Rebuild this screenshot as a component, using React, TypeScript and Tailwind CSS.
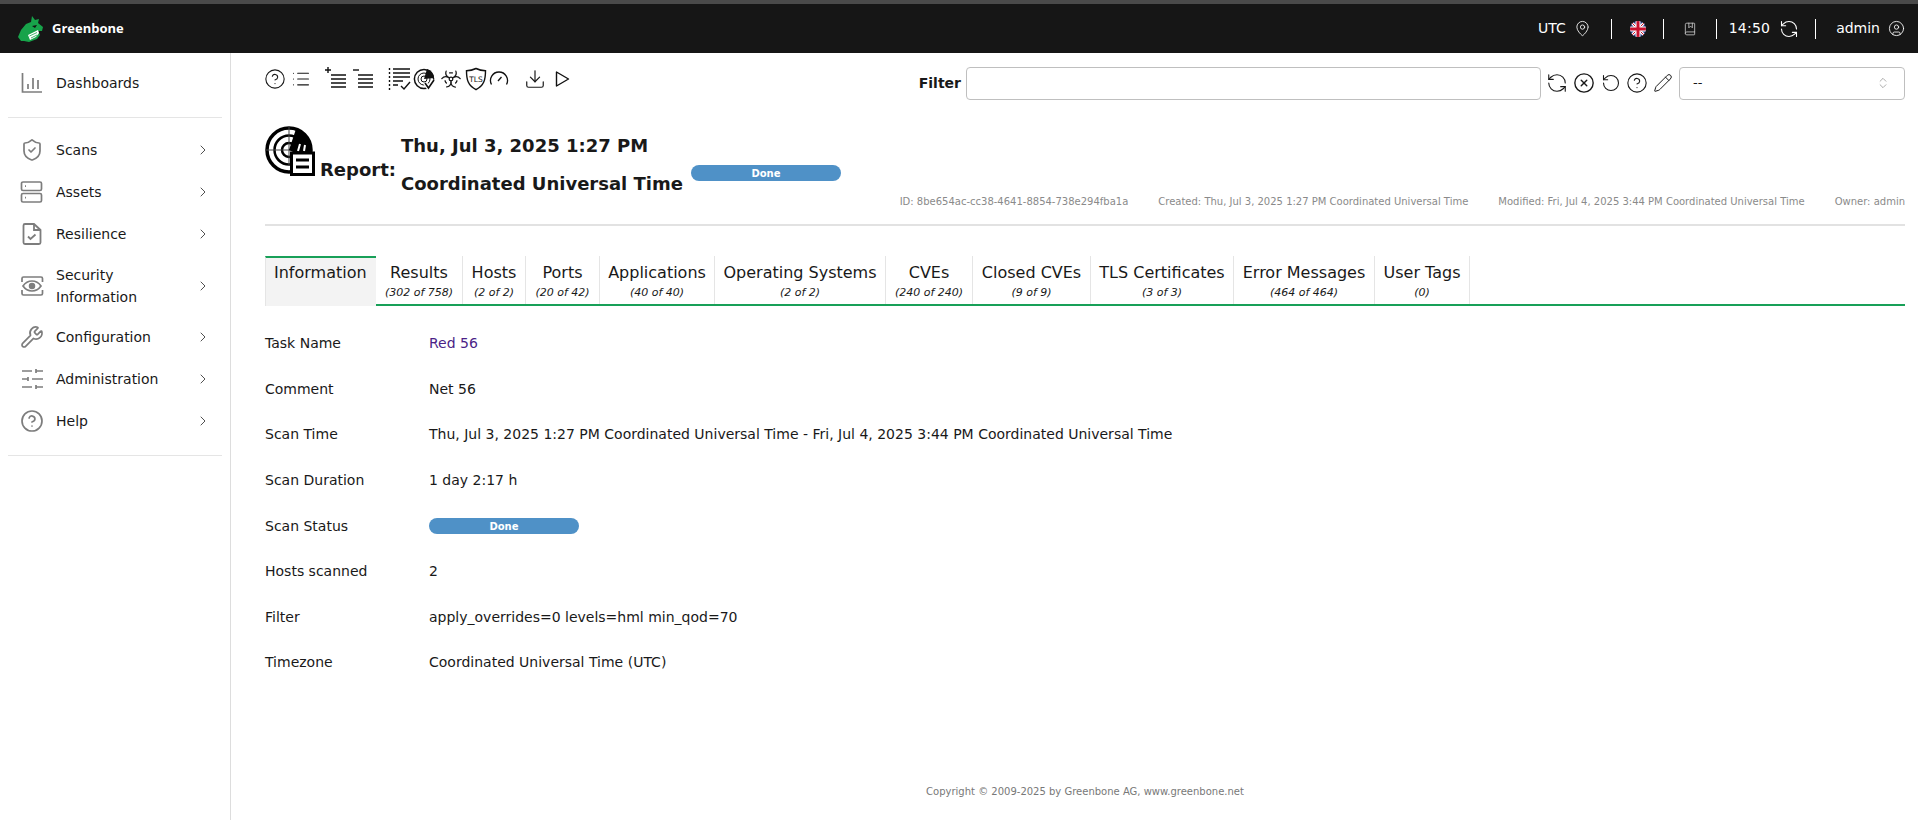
import {
  ChevronRight,
  ChevronsUpDown,
  CircleHelp,
  CircleUser,
  CircleX,
  Download,
  List,
  MapPin,
  Pencil,
  RefreshCcw,
  RotateCcw,
  ShieldCheck,
  Wrench,
  Biohazard,
  BookMarked,
} from "lucide-react";
import type { ReactNode } from "react";

const font = { fontFamily: '"DejaVu Sans", sans-serif' };

function Logo() {
  return (
    <svg viewBox="0 0 25 26" className="h-[26px] w-[25px]">
      <path d="M0 21 L3 14 L8 8 L13 6 L14 0 L17 4 L21 3 L20 7 L25 11 L24 15 L20 15 L22 19 L19 23 L11 26 L6 25 L3 25 Z" fill="#17a34a" />
      <path d="M10 19 L20 14 L21 17 L18 21 L12 24 Z" fill="#fff" />
      <path d="M11.5 20 L19 16.5M13 22 L19 19" stroke="#17a34a" strokeWidth="0.8" />
      <path d="M14 10 L19 9 L17 12 Z" fill="#111" />
    </svg>
  );
}

function DashboardIcon() {
  return (
    <svg viewBox="0 0 24 24" fill="none" stroke="#7d7d7d" strokeWidth="1.7" className="h-[24px] w-[24px]">
      <path d="M2.5 2v19h19.5" />
      <path d="M8 13v5M13 7v11M18 9v9" />
    </svg>
  );
}

function AssetsIcon() {
  return (
    <svg viewBox="0 0 24 24" fill="none" stroke="#7d7d7d" strokeWidth="1.7" className="h-[24px] w-[24px]">
      <rect x="1.5" y="2" width="20" height="8.5" rx="1.5" />
      <rect x="1.5" y="13.5" width="20" height="8.5" rx="1.5" />
      <path d="M5 6.2h1M5 17.7h1" />
    </svg>
  );
}

function ResilienceIcon() {
  return (
    <svg viewBox="0 0 24 24" fill="none" stroke="#7d7d7d" strokeWidth="1.8" className="h-[24px] w-[24px]">
      <path d="M14 2H5a1.5 1.5 0 0 0-1.5 1.5v17A1.5 1.5 0 0 0 5 22h14a1.5 1.5 0 0 0 1.5-1.5V8Z" />
      <path d="M14 2v6h6.5" />
      <path d="M8 14.5l2.5 2.5 5-4.5" />
    </svg>
  );
}

function SecurityIcon() {
  return (
    <svg viewBox="0 0 24 24" fill="none" stroke="#7d7d7d" strokeWidth="1.7" className="h-[24px] w-[24px]">
      <path d="M2 8V4.5A1.5 1.5 0 0 1 3.5 3H21a1.5 1.5 0 0 1 1.5 1.5V8M2 16v3.5A1.5 1.5 0 0 0 3.5 21H21a1.5 1.5 0 0 0 1.5-1.5V16" />
      <path d="M3 12s3.5-5 9-5 9 5 9 5-3.5 5-9 5-9-5-9-5Z" />
      <circle cx="12" cy="12" r="2.4" fill="#7d7d7d" />
    </svg>
  );
}

function AdminIcon() {
  return (
    <svg viewBox="0 0 24 24" fill="none" stroke="#7d7d7d" strokeWidth="1.7" className="h-[24px] w-[24px]">
      <path d="M2 4h10M16 4h7M16 2v4" />
      <path d="M2 12h6M8 10v4M12 12h11" />
      <path d="M2 20h10M16 20h7M16 18v4" />
    </svg>
  );
}

function ListPlus({ sign }: { sign: "+" | "-" }) {
  return (
    <svg viewBox="0 0 24 24" fill="none" stroke="#111" strokeWidth="1.4" className="h-[24px] w-[24px]">
      {sign === "+" ? <path d="M1 3h6M4 0v6" /> : <path d="M2 3h6" />}
      <path d="M7 8h15M7 12h15M7 16h15M7 20h15" />
    </svg>
  );
}

function ResultsIcon() {
  return (
    <svg viewBox="0 0 24 24" fill="none" stroke="#111" strokeWidth="1.4" className="h-[24px] w-[24px]">
      <path d="M1.5 1v22" strokeDasharray="2 2" />
      <path d="M5 2h17M5 6h17M5 10h17M5 14h10M5 18h5" />
      <path d="M13 19l3 3 6-7" />
    </svg>
  );
}

function RadarCheck() {
  return (
    <svg viewBox="0 0 24 24" fill="none" stroke="#111" className="h-[24px] w-[24px]">
      <circle cx="12" cy="12" r="9.6" strokeWidth="1.5" />
      <circle cx="12" cy="12" r="6" strokeWidth="1" />
      <circle cx="12" cy="12" r="3" strokeWidth="1" />
      <path d="M12 12 L15 2 A10 10 0 0 1 22 11 Z" fill="#111" stroke="none" />
      <path d="M13 16l3.5 5 5.5-8" stroke="#fff" strokeWidth="4" />
      <path d="M13 16l3.5 5 5.5-8" strokeWidth="1.6" />
    </svg>
  );
}

function TlsIcon() {
  return (
    <svg viewBox="0 0 24 24" fill="none" stroke="#111" strokeWidth="1.4" className="h-[24px] w-[24px]">
      <path d="M12 1.5c3 1.5 6 2.2 9.5 2.2 0 9-1.5 15-9.5 19-8-4-9.5-10-9.5-19 3.5 0 6.5-.7 9.5-2.2Z" />
      <text x="12" y="14.5" textAnchor="middle" fontSize="7.5" fill="#111" stroke="none" fontFamily="DejaVu Sans">TLS</text>
    </svg>
  );
}

function GaugeIcon() {
  return (
    <svg viewBox="0 0 20 20" fill="none" stroke="#111" strokeWidth="1.3" className="h-[20px] w-[20px]">
      <path d="M2.5 15.5A8.5 8.5 0 1 1 17.5 15.5" />
      <path d="M9 12l3.5-4" />
    </svg>
  );
}

function PlayIcon() {
  return (
    <svg viewBox="0 0 20 20" fill="none" stroke="#111" strokeWidth="1.4" className="h-[20px] w-[20px]">
      <path d="M3.5 3v14l12-7Z" strokeLinejoin="round" />
    </svg>
  );
}

function FlagIcon() {
  return (
    <svg viewBox="0 0 16 16" className="h-[16px] w-[16px]">
      <clipPath id="flag">
        <circle cx="8" cy="8" r="8" />
      </clipPath>
      <g clipPath="url(#flag)">
        <rect width="16" height="16" fill="#2b3f87" />
        <path d="M0 0L16 16M16 0L0 16" stroke="#fff" strokeWidth="3" />
        <path d="M0 0L16 16M16 0L0 16" stroke="#c8102e" strokeWidth="1" />
        <path d="M8 0V16M0 8H16" stroke="#fff" strokeWidth="5" />
        <path d="M8 0V16M0 8H16" stroke="#c8102e" strokeWidth="3" />
      </g>
    </svg>
  );
}

function ReportIcon() {
  return (
    <svg viewBox="0 0 50 50" fill="none" stroke="#000" className="h-[50px] w-[50px]">
      <circle cx="24" cy="24" r="22" strokeWidth="3.5" />
      <circle cx="24" cy="24" r="14.5" strokeWidth="2.5" />
      <circle cx="24" cy="24" r="7" strokeWidth="2.5" />
      <path d="M24 1V40M1 24H40" strokeWidth="1" stroke="#444" />
      <path d="M24 24 L31 3 A22 22 0 0 1 46 20 L46 26 L28 26 Z" fill="#000" stroke="none" />
      <path d="M33 25l2-7M39 25l1-6" stroke="#fff" strokeWidth="2" />
      <rect x="26.5" y="27" width="22" height="21.5" fill="#fff" strokeWidth="3" />
      <path d="M31 34h13M31 41h13" strokeWidth="3" />
    </svg>
  );
}

const navItems: { label: ReactNode; icon: ReactNode; h: string }[] = [
  { label: "Scans", icon: <ShieldCheck size={24} strokeWidth={1.7} color="#7d7d7d" />, h: "h-[42px]" },
  { label: "Assets", icon: <AssetsIcon />, h: "h-[42px]" },
  { label: "Resilience", icon: <ResilienceIcon />, h: "h-[42px]" },
  { label: <>Security<br />Information</>, icon: <SecurityIcon />, h: "h-[61px]" },
  { label: "Configuration", icon: <Wrench size={24} strokeWidth={1.7} color="#7d7d7d" />, h: "h-[42px]" },
  { label: "Administration", icon: <AdminIcon />, h: "h-[42px]" },
  { label: "Help", icon: <CircleHelp size={24} strokeWidth={1.7} color="#7d7d7d" />, h: "h-[42px]" },
];

const tabs = [
  { name: "Results", sub: "(302 of 758)", w: "w-[87px]" },
  { name: "Hosts", sub: "(2 of 2)", w: "w-[63px]" },
  { name: "Ports", sub: "(20 of 42)", w: "w-[74px]" },
  { name: "Applications", sub: "(40 of 40)", w: "w-[115px]" },
  { name: "Operating Systems", sub: "(2 of 2)", w: "w-[171px]" },
  { name: "CVEs", sub: "(240 of 240)", w: "w-[87px]" },
  { name: "Closed CVEs", sub: "(9 of 9)", w: "w-[118px]" },
  { name: "TLS Certificates", sub: "(3 of 3)", w: "w-[143px]" },
  { name: "Error Messages", sub: "(464 of 464)", w: "w-[141px]" },
  { name: "User Tags", sub: "(0)", w: "w-[95px]" },
];

function DoneBar({ className }: { className: string }) {
  return (
    <div className={`flex h-[16px] w-[150px] items-center justify-center rounded-full bg-[#4f91c7] text-[10px] font-bold text-white ${className}`}>
      Done
    </div>
  );
}

function Row({ label, children }: { label: string; children: ReactNode }) {
  return (
    <div className="flex h-[45.6px] items-center text-[14px] text-[#191919]">
      <div className="w-[164px]">{label}</div>
      <div>{children}</div>
    </div>
  );
}

export default function App() {
  return (
    <div style={font} className="flex h-[820px] w-[1918px] flex-col overflow-hidden bg-white text-[#191919]">
      <header className="flex h-[53px] flex-none items-center justify-between border-t-[4px] border-[#4a4a4a] bg-[#161616] pl-[18px] pr-[13px] text-white">
        <div className="flex items-center gap-[9px]">
          <Logo />
          <span className="font-['Open_Sans'] text-[13px] font-bold">Greenbone</span>
        </div>
        <div className="flex items-center text-[14px]">
          <span>UTC</span>
          <MapPin size={17} strokeWidth={1.2} className="ml-[8px]" />
          <div className="ml-[20px] h-[20px] w-px bg-white" />
          <div className="ml-[18px]"><FlagIcon /></div>
          <div className="ml-[17px] h-[20px] w-px bg-white" />
          <BookMarked size={14} strokeWidth={1.4} className="ml-[19px] text-[#cccccc]" />
          <div className="ml-[19px] h-[20px] w-px bg-white" />
          <span className="ml-[12px] tracking-[0.2px]">14:50</span>
          <RefreshCcw size={20} strokeWidth={1.3} className="ml-[9px]" />
          <div className="ml-[16px] h-[20px] w-px bg-white" />
          <span className="ml-[20px]">admin</span>
          <CircleUser size={17} strokeWidth={1.2} className="ml-[8px]" />
        </div>
      </header>

      <div className="flex min-h-0 flex-1">
        <aside className="w-[231px] flex-none border-r border-[#dddddd]">
          <div className="mx-[8px] border-b border-[#e5e5e5] pb-[13px] pt-[9px]">
            <div className="flex h-[42px] items-center pl-[12px] text-[14px]">
              <DashboardIcon />
              <span className="ml-[12px]">Dashboards</span>
            </div>
          </div>
          <div className="mx-[8px] border-b border-[#e5e5e5] pb-[13px] pt-[11px]">
            {navItems.map((item, i) => (
              <div key={i} className={`flex items-center pl-[12px] pr-[11px] text-[14px] leading-[22px] ${item.h}`}>
                {item.icon}
                <span className="ml-[12px] flex-1">{item.label}</span>
                <ChevronRight size={16} strokeWidth={1.4} color="#444" />
              </div>
            ))}
          </div>
        </aside>

        <main className="flex min-w-0 flex-1 flex-col pl-[34px] pr-[13px]">
          <div className="flex h-[60px] flex-none items-center justify-between">
            <div className="mb-[8px] flex items-center">
              <CircleHelp size={22} strokeWidth={1.2} className="-ml-[1px]" />
              <List size={20} strokeWidth={1.3} className="ml-[5px]" />
              <div className="ml-[13px]"><ListPlus sign="+" /></div>
              <div className="ml-[3px]"><ListPlus sign="-" /></div>
              <div className="ml-[13px]"><ResultsIcon /></div>
              <div><RadarCheck /></div>
              <Biohazard size={22} strokeWidth={1.4} className="ml-[4px]" />
              <div className="ml-[2px]"><TlsIcon /></div>
              <div className="ml-[1px]"><GaugeIcon /></div>
              <Download size={22} strokeWidth={1.3} className="ml-[15px]" />
              <div className="ml-[7px]"><PlayIcon /></div>
            </div>
            <div className="flex items-center">
              <span className="text-[14px] font-bold">Filter</span>
              <div className="ml-[5px] h-[33px] w-[575px] rounded-[4px] border border-[#bfbfbf]" />
              <RefreshCcw size={22} strokeWidth={1.2} className="ml-[5px]" />
              <CircleX size={22} strokeWidth={1.5} className="ml-[5px]" />
              <RotateCcw size={20} strokeWidth={1.3} className="ml-[6px]" />
              <CircleHelp size={22} strokeWidth={1.2} className="ml-[5px]" />
              <Pencil size={20} strokeWidth={1.2} className="ml-[5px]" />
              <div className="ml-[6px] flex h-[33px] w-[226px] items-center justify-between rounded-[4px] border border-[#bfbfbf] pl-[13px] pr-[14px] text-[13px]">
                <span>--</span>
                <ChevronsUpDown size={14} strokeWidth={1.2} color="#888" />
              </div>
            </div>
          </div>

          <div className="flex h-[70px] flex-none items-start pt-[11px]">
            <div className="mt-[2px]"><ReportIcon /></div>
            <span className="ml-[5px] mt-[32px] text-[18px] font-bold">Report:</span>
            <div className="ml-[5px] mt-[3px] text-[18px] font-bold leading-[38px]">
              <div>Thu, Jul 3, 2025 1:27 PM</div>
              <div>Coordinated Universal Time</div>
            </div>
            <DoneBar className="ml-[8px] mt-[41px]" />
          </div>

          <div className="mt-[11px] flex flex-none justify-end gap-[30px] border-b-2 border-[#e2e2e2] pb-[15px] text-[10px] text-[#8a8a8a]">
            <span>ID: 8be654ac-cc38-4641-8854-738e294fba1a</span>
            <span>Created: Thu, Jul 3, 2025 1:27 PM Coordinated Universal Time</span>
            <span>Modified: Fri, Jul 4, 2025 3:44 PM Coordinated Universal Time</span>
            <span>Owner: admin</span>
          </div>

          <div className="mt-[30px] flex h-[50px] flex-none">
            <div className="h-[50px] w-[111px] border-l border-t-2 border-[#e5e5e5] border-t-[#18a058] bg-[#f3f3f3] pl-[8px] pt-[3px] text-[16px]">
              Information
            </div>
            <div className="flex flex-1 border-b-2 border-[#18a058]">
              {tabs.map((t) => (
                <div key={t.name} className={`flex flex-none flex-col items-center border-r border-[#e5e5e5] pt-[7px] ${t.w}`}>
                  <span className="text-[16px] leading-[19px]">{t.name}</span>
                  <span className="mt-[4px] text-[11px] italic leading-[14px]">{t.sub}</span>
                </div>
              ))}
            </div>
          </div>

          <div className="mt-[15px] flex-none">
            <Row label="Task Name"><span className="text-[#4b1f87]">Red 56</span></Row>
            <Row label="Comment">Net 56</Row>
            <Row label="Scan Time">Thu, Jul 3, 2025 1:27 PM Coordinated Universal Time - Fri, Jul 4, 2025 3:44 PM Coordinated Universal Time</Row>
            <Row label="Scan Duration">1 day 2:17 h</Row>
            <Row label="Scan Status"><DoneBar className="" /></Row>
            <Row label="Hosts scanned">2</Row>
            <Row label="Filter">apply_overrides=0 levels=hml min_qod=70</Row>
            <Row label="Timezone">Coordinated Universal Time (UTC)</Row>
          </div>

          <div className="mt-auto pb-[21px] text-center text-[10px] text-[#787878]">
            Copyright © 2009-2025 by Greenbone AG, www.greenbone.net
          </div>
        </main>
      </div>
    </div>
  );
}
